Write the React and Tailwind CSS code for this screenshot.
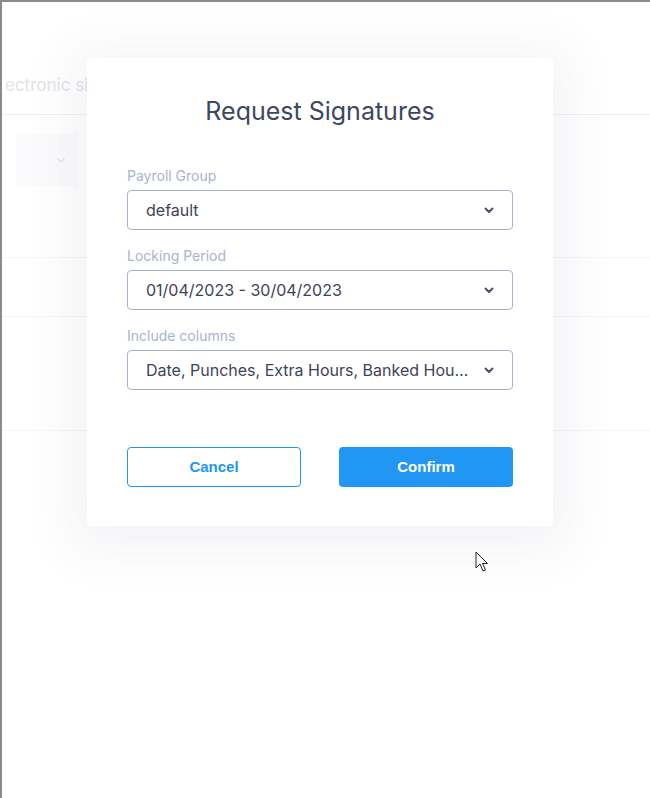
import React from "react";

function Chevron() {
  return (
    <svg width="10" height="7" viewBox="0 0 10 7" className="shrink-0">
      <path d="M1.5 1.5 L5 5 L8.5 1.5" fill="none" stroke="#4a5068" strokeWidth="2" strokeLinecap="round" strokeLinejoin="round" />
    </svg>
  );
}

function Field({ label, value }) {
  return (
    <div className="flex flex-col">
      <div className="text-[14px] leading-[20px] text-[#a9b3cb] mb-[4px]">{label}</div>
      <div className="h-[40px] rounded-[4px] border border-[#a9b2c9] flex items-center pl-[18px] pr-[18px] gap-[10px]">
        <span className="flex-1 min-w-0 truncate text-[16px] text-[#3d4358]">{value}</span>
        <Chevron />
      </div>
    </div>
  );
}

export default function App() {
  return (
    <div
      className="relative w-[650px] h-[798px] bg-white border-t-2 border-l-2 border-[#8c8a8f] overflow-hidden"
      style={{ fontFamily: "Inter, 'Noto Sans', sans-serif" }}
    >
      {/* faded page underneath */}
      <div className="flex flex-col">
        <div className="h-[112px] flex items-end pb-[16px] pl-[3px]">
          <span className="text-[17px] text-[#e2e4e8]">ectronic signatures</span>
        </div>
        <div className="h-px bg-[#eef0f3]" />
        <div className="h-[142px] pt-[18px] pl-[14px]">
          <div className="w-[62px] h-[54px] bg-[#fbfbfd] flex items-center justify-end pr-[12px]">
            <svg width="10" height="7" viewBox="0 0 10 7">
              <path d="M1.5 1.5 L5 5 L8.5 1.5" fill="none" stroke="#e0e2e7" strokeWidth="1.5" />
            </svg>
          </div>
        </div>
        <div className="h-px bg-[#f3f4f6]" />
        <div className="h-[58px]" />
        <div className="h-px bg-[#f3f4f6]" />
        <div className="h-[113px]" />
        <div className="h-px bg-[#f3f4f6]" />
      </div>

      {/* modal */}
      <div className="absolute left-[85px] top-[56px] w-[466px] bg-white rounded-[4px] shadow-[0_8px_50px_18px_rgba(60,70,120,0.06)] px-[40px] pt-[40px] pb-[39px]">
        <h2 className="text-center text-[25px] leading-[26px] text-[#3f4663] font-normal mb-[42px]">
          Request Signatures
        </h2>
        <div className="flex flex-col gap-[16px]">
          <Field label="Payroll Group" value="default" />
          <Field label="Locking Period" value="01/04/2023 - 30/04/2023" />
          <Field label="Include columns" value="Date, Punches, Extra Hours, Banked Hours, Absences" />
        </div>
        <div
          className="grid grid-cols-2 gap-[38px] mt-[57px]"
          style={{ fontFamily: "'Liberation Sans', Arial, sans-serif" }}
        >
          <button className="h-[40px] rounded-[4px] border border-[#2196f3] text-[#2196f3] text-[15px] font-bold bg-white">
            Cancel
          </button>
          <button className="h-[40px] rounded-[4px] bg-[#2196f3] text-white text-[15px] font-bold">
            Confirm
          </button>
        </div>
      </div>

      {/* mouse cursor */}
      <svg className="absolute left-[473px] top-[549px]" width="14" height="22" viewBox="0 0 14 22">
        <path d="M1 1 L1 17 L5 13 L8 20 L10.5 19 L7.5 12.5 L12.5 12.5 Z" fill="white" stroke="#222" strokeWidth="1" strokeLinejoin="round" />
      </svg>
    </div>
  );
}
